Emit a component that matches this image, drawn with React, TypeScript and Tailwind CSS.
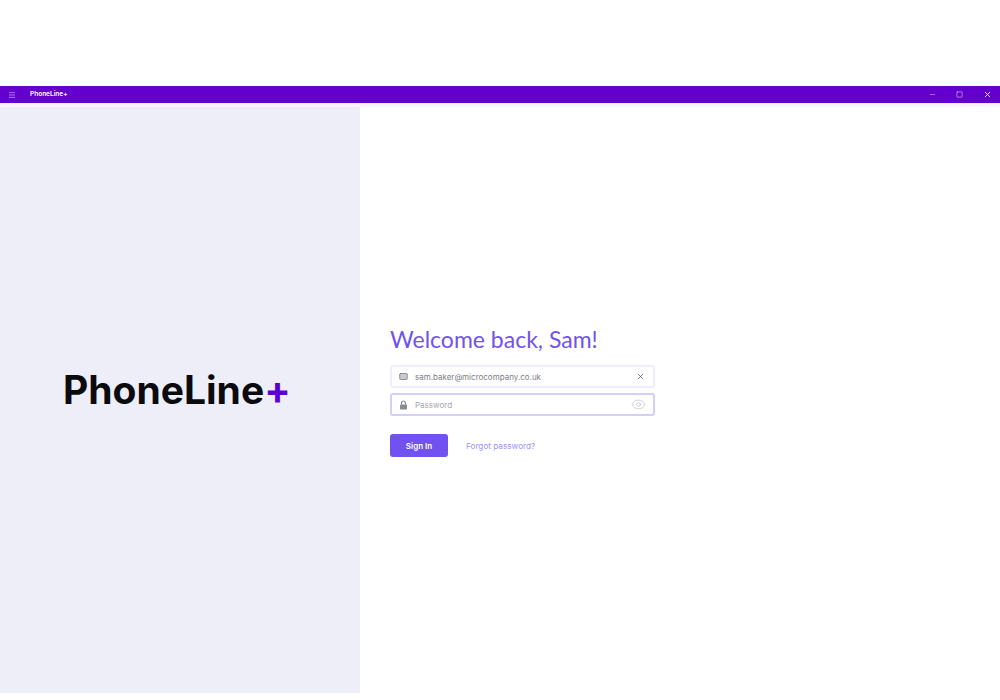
import React from 'react';
import { Mail, X, Eye, Menu, Minus, Square } from 'lucide-react';

const App = () => {
  return (
    <div className="w-[1000px] h-[700px] bg-white flex flex-col overflow-hidden font-['Inter',sans-serif]">
      <div className="h-[86px]" />

      {/* title bar */}
      <div className="h-[17px] bg-[#6400ce] flex items-center text-white">
        <Menu size={8} strokeWidth={2} className="ml-2 opacity-70" />
        <span className="ml-[14px] pt-px text-[6.5px] font-semibold">PhoneLine+</span>
        <div className="ml-auto flex items-center gap-[20px] mr-[8px]">
          <Minus size={7} strokeWidth={2} className="opacity-70" />
          <Square size={7} strokeWidth={2} className="opacity-80" />
          <X size={9} strokeWidth={2.5} className="opacity-90" />
        </div>
      </div>
      <div className="h-1 bg-[#f8f5fe]" />

      <div className="h-[586px] flex">
        <div className="w-[360px] bg-[#eeeef9] flex items-center">
          <div className="ml-[63px] mb-[22px] text-[39px] leading-none font-bold text-[#0b0b0f]">
            PhoneLine<span className="text-[#5c00cf]">+</span>
          </div>
        </div>

        <div className="flex-1 pl-[30px] pt-[217px]">
          <h1 className="text-[23px] leading-[30px] text-[#7152f0] font-normal font-['Lato',sans-serif]">Welcome back, Sam!</h1>

          <div className="mt-[11px] w-[265px] h-[23px] rounded-[3px] border-2 border-[#f0edfd] flex items-center px-[7px] text-[#77777f]">
            <Mail size={9} strokeWidth={2} fill="#c9c9cf" />
            <span className="ml-[7px] text-[8px] text-[#7d7d87]">sam.baker@microcompany.co.uk</span>
            <X size={9} strokeWidth={2} className="ml-auto mr-[1px] text-[#55555f]" />
          </div>

          <div className="mt-[5px] w-[265px] h-[23px] rounded-[3px] border-2 border-[#d6cdfb] flex items-center px-[7px]">
            <svg width="9" height="10" viewBox="0 0 9 10">
              <path d="M2.5 4.5V3a2 2 0 0 1 4 0v1.5" fill="none" stroke="#8a8a92" strokeWidth="1.2" />
              <rect x="1" y="4.5" width="7" height="5" rx="0.8" fill="#8a8a92" />
            </svg>
            <span className="ml-[7px] text-[8px] text-[#a5a5ad]">Password</span>
            <Eye size={15} strokeWidth={1} className="ml-auto text-[#b5b5bb]" />
          </div>

          <div className="mt-[18px] flex items-center">
            <button className="w-[58px] h-[23px] rounded-[3px] bg-[#7152f0] text-white text-[8px] font-semibold">
              Sign In
            </button>
            <a className="ml-[18px] pt-px text-[8.2px] text-[#9a94f7]">Forgot password?</a>
          </div>
        </div>
      </div>
    </div>
  );
};

export default App;
